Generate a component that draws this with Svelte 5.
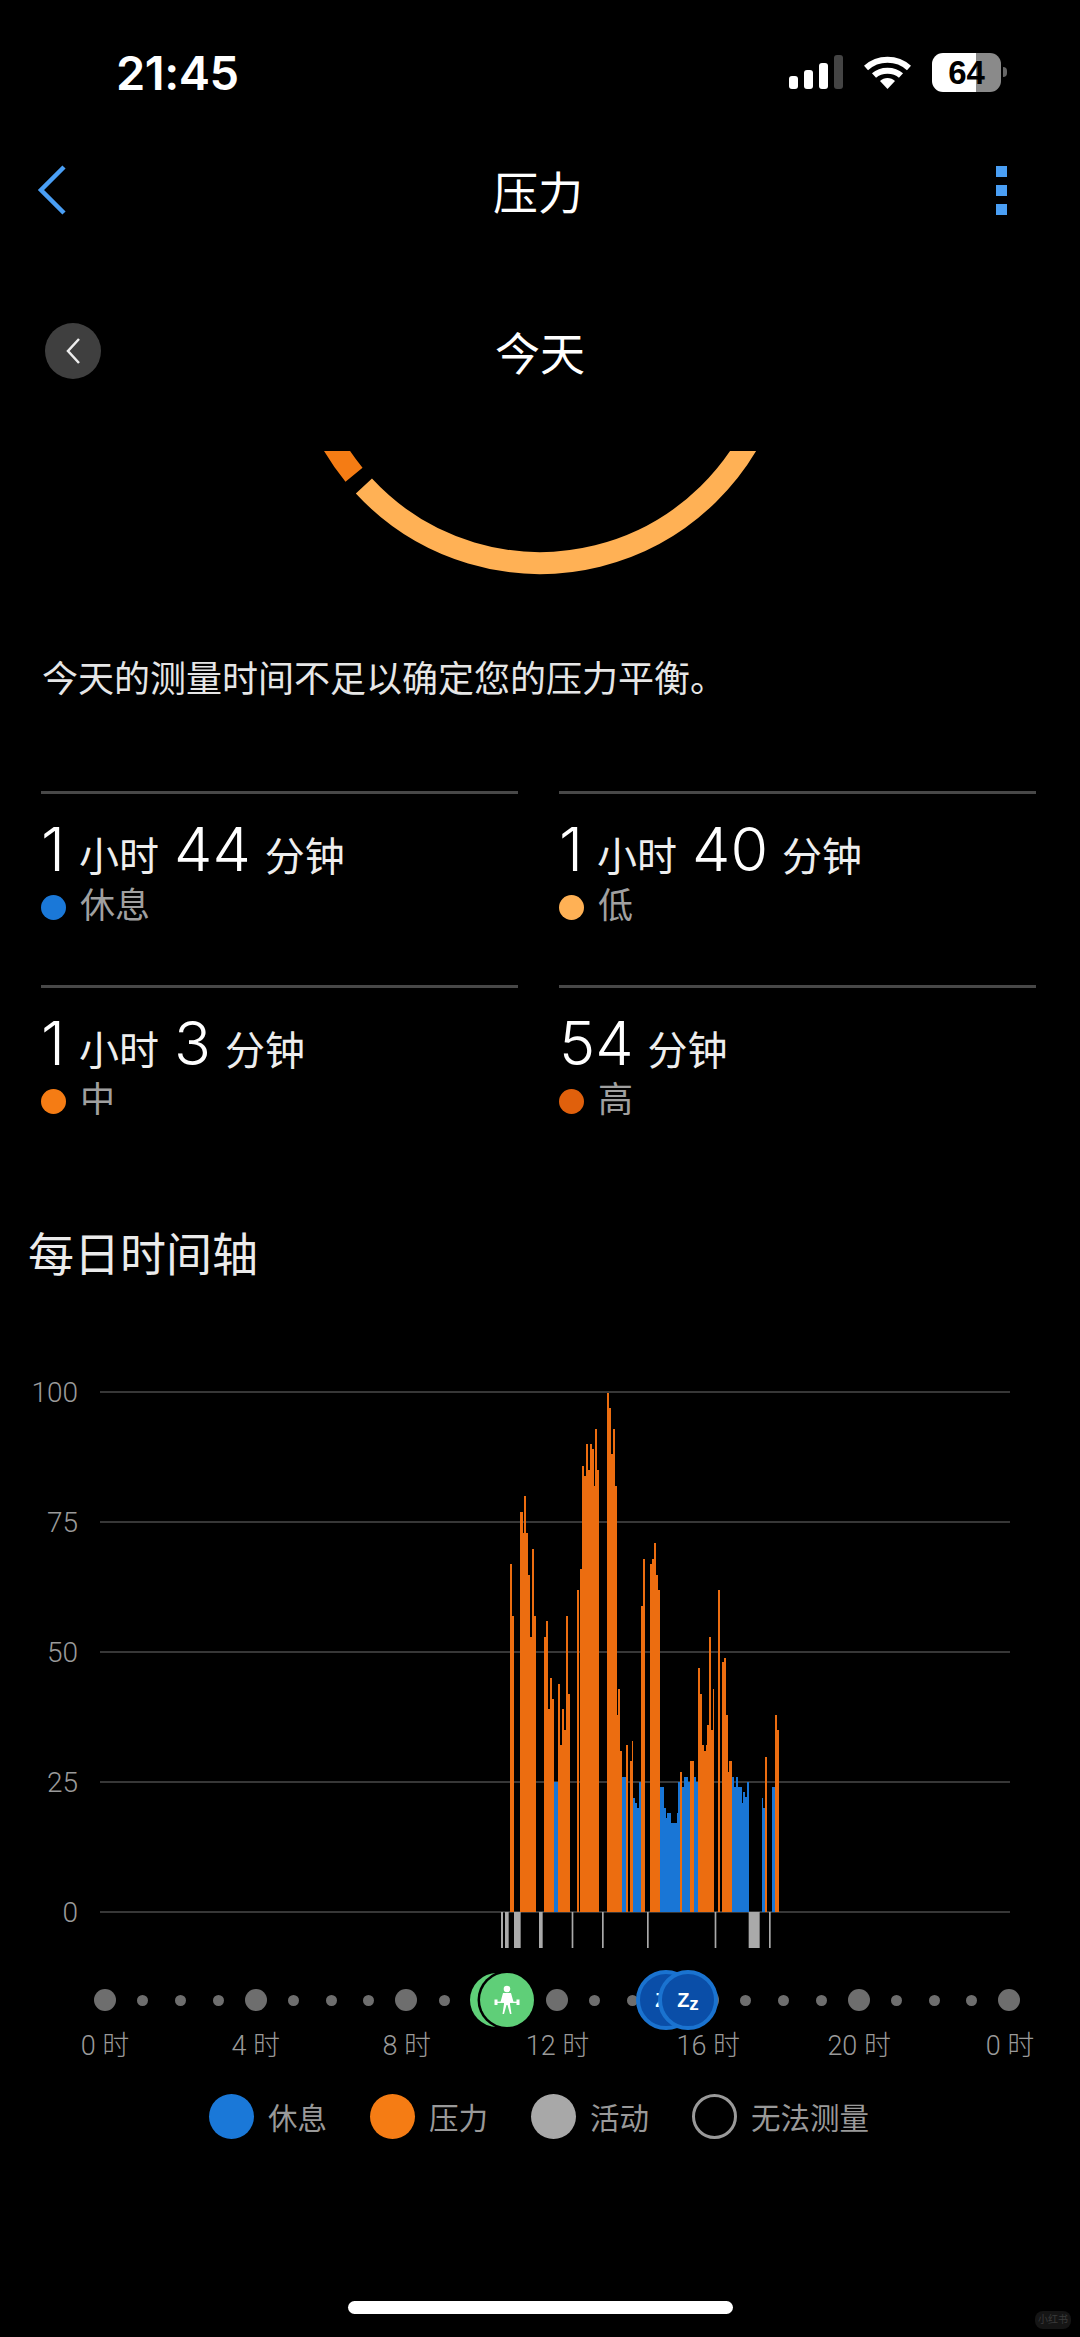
<script>
	// [left, right, top] left/right in 1/3 px from x=480, top in page px
	const o = 'o';
	const b = 'b';
	const bars = [
		[91, 97, 1564, o], [95, 103, 1616, o],
		[121, 128, 1512, o], [128, 133, 1533, o], [132, 138, 1496, o], [138, 144, 1533, o], [144, 150, 1575, o],
		[150, 155, 1637, o], [155, 161, 1549, o], [161, 167, 1616, o],
		[193, 198, 1637, o], [198, 204, 1621, o], [204, 210, 1709, o], [210, 216, 1678, o], [216, 222, 1699, o],
		[222, 235, 1782, b], [235, 241, 1684, o], [241, 247, 1745, o], [247, 253, 1709, o], [253, 258, 1730, o],
		[258, 263, 1616, o], [263, 269, 1694, o],
		[291, 297, 1590, o], [301, 307, 1569, o], [307, 313, 1466, o], [313, 319, 1476, o], [319, 325, 1444, o],
		[325, 331, 1470, o], [331, 337, 1444, o], [337, 342, 1449, o], [342, 346, 1486, o], [346, 352, 1429, o],
		[352, 357, 1470, o],
		[382, 388, 1393, o], [388, 394, 1408, o], [394, 400, 1454, o], [400, 405, 1429, o], [405, 410, 1486, o],
		[410, 415, 1715, o], [415, 421, 1689, o], [421, 426, 1751, o], [426, 438, 1777, b], [438, 444, 1745, o],
		[449, 455, 1761, o], [455, 460, 1741, o], [460, 466, 1798, b], [466, 472, 1803, b], [472, 477, 1808, b],
		[477, 482, 1782, b], [482, 490, 1606, o], [488, 496, 1559, o],
		[511, 517, 1564, o], [517, 523, 1559, o], [523, 529, 1543, o], [529, 534, 1575, o], [534, 540, 1590, o],
		[540, 551, 1787, b], [551, 557, 1808, b], [557, 562, 1818, b], [562, 573, 1813, b], [573, 590, 1823, b],
		[590, 595, 1813, b], [595, 600, 1782, b], [600, 606, 1772, o], [606, 612, 1787, b], [612, 624, 1777, b],
		[624, 630, 1782, b], [630, 642, 1761, o], [642, 648, 1777, b], [648, 654, 1782, b],
		[654, 660, 1668, o], [660, 666, 1694, o], [666, 672, 1745, o], [672, 678, 1751, o], [678, 684, 1745, o],
		[682, 688, 1725, o], [687, 693, 1637, o], [693, 698, 1730, o], [698, 703, 1689, o],
		[714, 720, 1590, o], [726, 732, 1662, o], [732, 738, 1658, o], [738, 743, 1715, o], [743, 748, 1772, o],
		[748, 755, 1761, o], [757, 763, 1777, b], [763, 769, 1787, b], [769, 775, 1777, b], [775, 785, 1787, b],
		[785, 790, 1803, b], [790, 795, 1792, b], [795, 800, 1797, b], [800, 806, 1782, b],
		[845, 850, 1798, b], [850, 855, 1808, b], [855, 860, 1757, o],
		[877, 885, 1787, b], [885, 891, 1715, o], [891, 896, 1730, o]
	];
	const ticks = [[63, 69], [75, 86], [102, 122], [177, 188], [275, 280], [366, 371], [501, 506], [704, 709], [806, 839], [867, 872]];
	const grid = [
		{ label: '100', y: 1392 },
		{ label: '75', y: 1522 },
		{ label: '50', y: 1652 },
		{ label: '25', y: 1782 },
		{ label: '0', y: 1912 }
	];
	const stats = [
		{ parts: [['1', '小时'], ['44', '分钟']], label: '休息', color: '#1a78d8' },
		{ parts: [['1', '小时'], ['40', '分钟']], label: '低', color: '#ffb155' },
		{ parts: [['1', '小时'], ['3', '分钟']], label: '中', color: '#f57c14' },
		{ parts: [['54', '分钟']], label: '高', color: '#e0600c' }
	];
	const hours = ['0', '4', '8', '12', '16', '20', '0'];
	const dots = Array.from({ length: 25 }, (_, i) => i % 4 === 0);
	const legend = [
		{ label: '休息', cls: 'rest' },
		{ label: '压力', cls: 'stress' },
		{ label: '活动', cls: 'active' },
		{ label: '无法测量', cls: 'none' }
	];
	const px = (v) => 480 + v / 3;

	function arc(from, to) {
		const r = 240;
		const p = (a) => [540 + r * Math.cos((a * Math.PI) / 180), 323 + r * Math.sin((a * Math.PI) / 180)];
		const [x1, y1] = p(from);
		const [x2, y2] = p(to);
		return `M${x1} ${y1} A${r} ${r} 0 0 0 ${x2} ${y2}`;
	}
</script>

<div class="page">
	<div class="status">
		<span class="time">21:45</span>
		<div class="status-icons">
			<div class="signal">
				<i style="height:13px"></i>
				<i style="height:19px"></i>
				<i style="height:26px"></i>
				<i class="off" style="height:34px"></i>
			</div>
			<svg class="wifi" width="47" height="34" viewBox="0 0 47 34">
				<path d="M2 13 C14 2 33 2 45 13" fill="none" stroke="#fff" stroke-width="6" />
				<path d="M10 20.5 C17 14 30 14 37 20.5" fill="none" stroke="#fff" stroke-width="6" />
				<path d="M16 26 C20 22 27 22 31 26 L23.500 34 Z" fill="#fff" />
			</svg>
			<div class="battery"><span>64</span></div>
			<div class="battery-cap"></div>
		</div>
	</div>

	<div class="nav">
		<svg class="nav-back" width="30" height="50" viewBox="0 0 30 50">
			<path d="M27 2 L4 25 L27 48" fill="none" stroke="#4a9ff5" stroke-width="4.500" />
		</svg>
		<h1>压力</h1>
		<div class="kebab"><i></i><i></i><i></i></div>
	</div>

	<div class="date">
		<button class="prev" aria-label="prev">
			<svg width="16" height="28" viewBox="0 0 16 28">
				<path d="M14 2 L3 14 L14 26" fill="none" stroke="#eee" stroke-width="2.500" />
			</svg>
		</button>
		<h2>今天</h2>
	</div>

	<svg class="gauge" width="1080" height="130" viewBox="0 451 1080 130">
		<path d={arc(165, 140.8)} fill="none" stroke="#f57c14" stroke-width="22" />
		<path d={arc(137.2, 15)} fill="none" stroke="#ffb155" stroke-width="22" />
	</svg>

	<p class="note">今天的测量时间不足以确定您的压力平衡。</p>

	<div class="stats">
		{#each stats as s}
			<div class="stat">
				<div class="value">
					{#each s.parts as [n, u]}
						<span class="num">{n}</span><span class="unit">{u}</span>
					{/each}
				</div>
				<div class="stat-label"><i style="background:{s.color}"></i>{s.label}</div>
			</div>
		{/each}
	</div>

	<h3>每日时间轴</h3>

	<svg class="chart" width="1080" height="570" viewBox="0 1380 1080 570">
		{#each grid as g}
			<line x1="100" x2="1010" y1={g.y} y2={g.y} stroke="#4a4a4a" stroke-width="1.500" />
			<text x="78" y={g.y + 10} text-anchor="end">{g.label}</text>
		{/each}
		{#each bars as [l, r, top, kind]}
			<rect x={px(l)} y={top} width={(r - l) / 3} height={1912 - top} fill={kind === 'o' ? '#ec6d10' : '#1976d6'} shape-rendering="crispEdges" />
		{/each}
		{#each ticks as [l, r]}
			<rect x={px(l)} y="1912" width={(r - l) / 3} height="36" fill="#aaa" />
		{/each}
	</svg>

	<div class="timeline">
		<div class="dots">
			{#each dots as big}
				<div class="cell"><i class:big></i></div>
			{/each}
		</div>
		<div class="marker green back"></div>
		<div class="marker green front">
			<svg width="54" height="54" viewBox="-27 -27 54 54">
				<circle cx="0" cy="-11" r="3.300" fill="#fff" />
				<path d="M-4 -7 L4 -7 L6.500 2 L3 2 L3 4 L4.500 14 L3 14 L0.500 5 L-0.500 5 L-3 14 L-4.500 14 L-3 4 L-3 2 L-6.500 2 Z" fill="#fff" />
				<path d="M-12 2.300 L12 2.300" stroke="#fff" stroke-width="1.300" />
				<path d="M-11 -0.500 L-11 5 M11 -0.500 L11 5" stroke="#fff" stroke-width="3" />
			</svg>
		</div>
		<div class="marker blue b1">Z<small>z</small></div>
		<div class="marker blue b2">Z<small>z</small></div>
	</div>

	<div class="hours">
		{#each hours as h}
			<span>{h} 时</span>
		{/each}
	</div>

	<div class="legend">
		{#each legend as item}
			<div class="legend-item"><i class={item.cls}></i>{item.label}</div>
		{/each}
	</div>

	<div class="home"></div>
	<div class="watermark">小红书</div>
</div>

<style>
	:global(body) {
		background: #000;
	}
	.page {
		position: relative;
		width: 1080px;
		height: 2337px;
		background: #000;
		color: #fff;
		overflow: hidden;
		font-family: Roboto, 'Noto Sans CJK SC', sans-serif;
	}
	i {
		display: block;
	}
	h1,
	h2,
	h3,
	p {
		margin: 0;
		font-weight: 400;
	}
	.status {
		height: 144px;
		display: flex;
		align-items: center;
		justify-content: space-between;
		padding: 0 73px 0 116px;
		box-sizing: border-box;
	}
	.time {
		font-family: Inter, sans-serif;
		font-size: 47px;
		font-weight: 600;
		letter-spacing: -0.5px;
	}
	.status-icons {
		display: flex;
		align-items: center;
	}
	.signal {
		display: flex;
		align-items: flex-end;
		gap: 6px;
		height: 34px;
		margin-right: 21px;
	}
	.signal i {
		width: 9px;
		background: #fff;
		border-radius: 3px;
	}
	.signal i.off {
		background: #444;
	}
	.battery {
		width: 69px;
		height: 39px;
		margin-left: 21px;
		border-radius: 11px;
		background: linear-gradient(90deg, #fff 44px, #8a8a8a 44px);
		color: #000;
		font-family: 'Liberation Sans', sans-serif;
		font-size: 33px;
		font-weight: 700;
		line-height: 39px;
		text-align: center;
	}
	.battery-cap {
		width: 4px;
		height: 10px;
		margin-left: 2px;
		background: #666;
		border-radius: 0 4px 4px 0;
	}
	.nav {
		height: 92px;
		display: grid;
		grid-template-columns: 1fr auto 1fr;
		align-items: center;
	}
	.nav-back {
		margin-left: 37px;
	}
	.nav h1 {
		font-size: 45px;
		margin-left: -4px;
	}
	.kebab {
		justify-self: end;
		margin-right: 73px;
		display: flex;
		flex-direction: column;
		gap: 8px;
	}
	.kebab i {
		width: 11px;
		height: 11px;
		background: #4a9ff5;
	}
	.date {
		position: relative;
		height: 56px;
		margin-top: 87px;
		display: flex;
		align-items: center;
		justify-content: center;
	}
	.date h2 {
		font-size: 45px;
	}
	.prev {
		position: absolute;
		left: 45px;
		top: 0;
		width: 56px;
		height: 56px;
		padding: 0;
		border: 0;
		border-radius: 50%;
		background: #3f3f3f;
		display: flex;
		align-items: center;
		justify-content: center;
	}
	.gauge {
		display: block;
		margin-top: 72px;
	}
	.note {
		margin-top: 74px;
		padding-left: 42px;
		font-size: 36px;
		line-height: 50px;
		color: #e6e6e6;
	}
	.stats {
		margin-top: 86px;
		padding-left: 41px;
		display: grid;
		grid-template-columns: 477px 477px;
		column-gap: 41px;
	}
	.stat {
		height: 194px;
		box-sizing: border-box;
		border-top: 3px solid #484848;
	}
	.value {
		display: flex;
		align-items: baseline;
		height: 70px;
		margin-top: 20px;
	}
	.num {
		font-family: Inter, sans-serif;
		font-size: 61px;
		font-weight: 300;
		line-height: 70px;
		margin-right: 14px;
	}
	.unit {
		font-size: 40px;
		color: #eee;
		margin-right: 15px;
	}
	.stat-label {
		display: flex;
		align-items: center;
		gap: 14px;
		font-size: 35px;
		line-height: 44px;
		color: #a0a0a0;
		margin-top: 1px;
	}
	.stat-label i {
		width: 25px;
		height: 25px;
		border-radius: 50%;
	}
	h3 {
		margin-top: 46px;
		padding-left: 28px;
		font-size: 46px;
		line-height: 60px;
		color: #ebebeb;
	}
	.chart {
		display: block;
		margin-top: 95px;
	}
	.chart text {
		font-family: Roboto, sans-serif;
		font-size: 28px;
		font-weight: 300;
		fill: #9a9a9a;
	}
	.timeline {
		position: relative;
		margin-top: 22px;
		height: 56px;
	}
	.dots {
		display: flex;
		padding-left: 86.150px;
	}
	.cell {
		width: 37.700px;
		height: 56px;
		display: flex;
		flex: none;
		align-items: center;
		justify-content: center;
	}
	.cell i {
		width: 11px;
		height: 11px;
		border-radius: 50%;
		background: #6e6e6e;
	}
	.cell i.big {
		width: 22px;
		height: 22px;
	}
	.marker {
		position: absolute;
		top: 50%;
		box-sizing: border-box;
		border-radius: 50%;
		display: flex;
		align-items: center;
		justify-content: center;
		transform: translateY(-50%);
	}
	.green {
		width: 54px;
		height: 54px;
		background: #5fcf78;
	}
	.green.back {
		left: 470px;
	}
	.green.front {
		left: 480px;
		box-shadow: 0 0 0 2.500px #000;
	}
	.blue {
		width: 60px;
		height: 60px;
		background: #0a4ea8;
		border: 4px solid #1a73d0;
		color: #fff;
		font-family: 'Liberation Sans', sans-serif;
		font-size: 20px;
		font-weight: 700;
	}
	.blue small {
		font-size: 19px;
		margin-top: 7px;
	}
	.blue.b1 {
		left: 636px;
	}
	.blue.b2 {
		left: 658px;
	}
	.hours {
		display: flex;
		padding-left: 29.600px;
		height: 36px;
	}
	.hours span {
		flex: none;
		width: 150.830px;
		text-align: center;
		font-size: 27px;
		font-weight: 300;
		line-height: 36px;
		color: #9a9a9a;
	}
	.legend {
		margin-top: 29px;
		padding-left: 209px;
		display: flex;
		gap: 43px;
		height: 46px;
	}
	.legend-item {
		display: flex;
		align-items: center;
		gap: 14px;
		font-size: 29.500px;
		color: #999;
	}
	.legend-item i {
		width: 45px;
		height: 45px;
		box-sizing: border-box;
		border-radius: 50%;
	}
	.rest {
		background: #1a78d8;
	}
	.stress {
		background: #f57c14;
	}
	.active {
		background: #a8a8a8;
	}
	.none {
		border: 3px solid #999;
	}
	.home {
		width: 385px;
		height: 13px;
		margin: 162px 0 0 348px;
		border-radius: 7px;
		background: #fff;
	}
	.watermark {
		position: absolute;
		left: 1035px;
		top: 2311px;
		width: 36px;
		height: 18px;
		border-radius: 8px;
		background: #151515;
		color: #3a3a3a;
		font-size: 10px;
		line-height: 18px;
		text-align: center;
	}
</style>
